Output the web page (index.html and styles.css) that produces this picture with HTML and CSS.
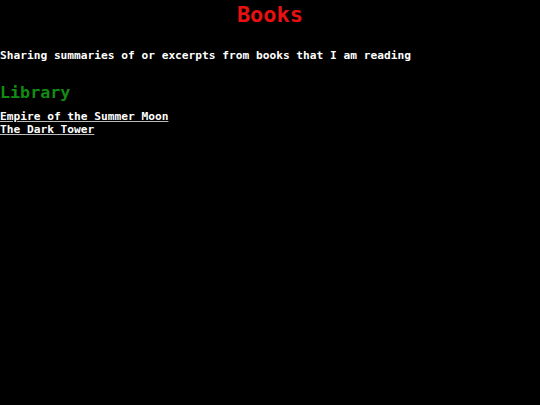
FILE: index.html
```html
<!DOCTYPE html>
<html>
<head>
<meta charset="utf-8">
<link rel="stylesheet" href="styles.css">
</head>
<body>
<h1 class="title">Books</h1>
<p class="intro">Sharing summaries of or excerpts from books that I am reading</p>
<h2 class="section">Library</h2>
<ul class="list">
<li><a class="link" href="#">Empire of the Summer Moon</a></li>
<li><a class="link" href="#">The Dark Tower</a></li>
</ul>
</body>
</html>
```
FILE: styles.css
```css
html, body {
  margin: 0;
  padding: 0;
  background: #000;
  color: #fff;
  font-family: "DejaVu Sans Mono", "Liberation Mono", monospace;
}
.title {
  margin: 0;
  padding-top: 4px;
  text-align: center;
  color: #e81010;
  font-size: 22px;
  line-height: 22px;
  font-weight: bold;
}
.intro {
  margin: 23px 0 0 0;
  font-size: 11.2px;
  line-height: 14px;
  font-weight: bold;
}
.section {
  margin: 19px 0 0 0;
  color: #118c11;
  font-size: 16.7px;
  line-height: 20px;
  font-weight: bold;
}
.list {
  list-style: none;
  margin: 8px 0 0 0;
  padding: 0;
}
.list li {
  font-size: 11.2px;
  line-height: 13px;
  font-weight: bold;
}
.link {
  color: #fff;
  text-decoration: underline;
  text-decoration-color: #bbb;
}
```
